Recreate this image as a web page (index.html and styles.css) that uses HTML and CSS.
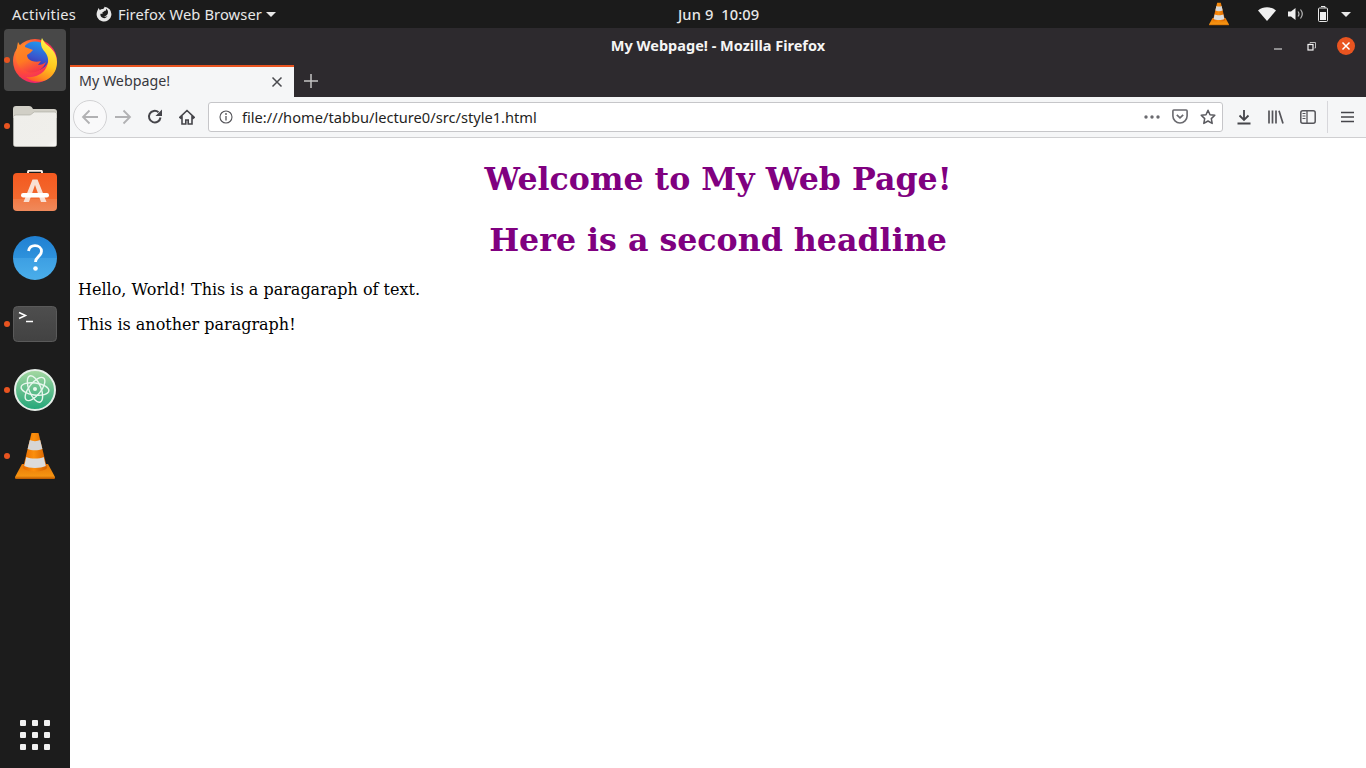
FILE: index.html
```html
<!DOCTYPE html>
<html>
<head>
    <meta charset="UTF-8">
    <meta name="viewport" content="width=device-width, initial-scale=1.0">
    <title>My Webpage! - Mozilla Firefox</title>
    <link rel="stylesheet" href="styles.css">
</head>
<body>
    <svg class="defs" width="0" height="0">
        <defs>
            <radialGradient id="foxBase" cx="0.25" cy="0.3" r="0.9">
                <stop offset="0" stop-color="#ff9a2a"/>
                <stop offset="0.5" stop-color="#ff4a3a"/>
                <stop offset="0.85" stop-color="#ee1f72"/>
                <stop offset="1" stop-color="#c9189a"/>
            </radialGradient>
            <linearGradient id="foxTail" x1="0.6" y1="0" x2="0.3" y2="1">
                <stop offset="0" stop-color="#fff44a"/>
                <stop offset="0.55" stop-color="#ffc81e"/>
                <stop offset="0.85" stop-color="#ff8a1e"/>
                <stop offset="1" stop-color="#ff5a2a"/>
            </linearGradient>
            <linearGradient id="foxGlobe" x1="0.7" y1="0" x2="0.4" y2="1">
                <stop offset="0" stop-color="#1d9af0"/>
                <stop offset="0.55" stop-color="#3a55cc"/>
                <stop offset="1" stop-color="#3f1f9a"/>
            </linearGradient>
            <linearGradient id="foxFur" x1="0.2" y1="0" x2="0.6" y2="1">
                <stop offset="0" stop-color="#ff8a2a"/>
                <stop offset="0.55" stop-color="#ff7a22"/>
                <stop offset="1" stop-color="#f4344a"/>
            </linearGradient>
            <linearGradient id="folderBody" x1="0" y1="0" x2="1" y2="1">
                <stop offset="0" stop-color="#efeeea"/>
                <stop offset="0.85" stop-color="#f0efeb"/>
                <stop offset="1" stop-color="#fbfbf9"/>
            </linearGradient>
            <linearGradient id="shopBody" x1="0" y1="0" x2="0" y2="1">
                <stop offset="0" stop-color="#f4591f"/>
                <stop offset="0.68" stop-color="#f26a30"/>
                <stop offset="0.68" stop-color="#f27a45"/>
                <stop offset="1" stop-color="#ef8a5c"/>
            </linearGradient>
            <linearGradient id="helpBody" x1="0" y1="0" x2="0" y2="1">
                <stop offset="0" stop-color="#2080d2"/>
                <stop offset="0.5" stop-color="#2e92dc"/>
                <stop offset="0.5" stop-color="#3d9fe3"/>
                <stop offset="1" stop-color="#4aaeea"/>
            </linearGradient>
            <linearGradient id="termBody" x1="0" y1="0" x2="0" y2="1">
                <stop offset="0" stop-color="#4e4e4e"/>
                <stop offset="1" stop-color="#424242"/>
            </linearGradient>
            <linearGradient id="atomBody" x1="0" y1="0" x2="0" y2="1">
                <stop offset="0" stop-color="#a6d8a2"/>
                <stop offset="1" stop-color="#22a679"/>
            </linearGradient>
            <linearGradient id="coneBody" x1="0" y1="0" x2="1" y2="0">
                <stop offset="0" stop-color="#e86a00"/>
                <stop offset="0.45" stop-color="#fb8f0c"/>
                <stop offset="1" stop-color="#d45f00"/>
            </linearGradient>
            <linearGradient id="coneBase" x1="0" y1="0" x2="0" y2="1">
                <stop offset="0" stop-color="#e87704"/>
                <stop offset="0.8" stop-color="#f59412"/>
                <stop offset="1" stop-color="#b85600"/>
            </linearGradient>
            <symbol id="cone" viewBox="0 0 40 46">
                <path d="M7 31L0 44c0 1 0 2 1 2h38c1 0 1-1 1-2l-7-13z" fill="url(#coneBase)"/>
                <path d="M16.500 0h7L32 35c-3 4.500-21 4.500-24 0z" fill="url(#coneBody)"/>
                <path d="M14.800 7c3 1.500 7.400 1.500 10.400 0l2.200 9c-4 1.700-11 1.700-14.800 0z" fill="#d6d6d6"/>
                <path d="M11.300 24c4.500 2 13 2 17.400 0l2.100 9c-5 2.500-16.600 2.500-21.600 0z" fill="#dcdcdc"/>
            </symbol>
        </defs>
    </svg>

    <div class="topbar">
        <div class="topbar-left">
            <span class="activities">Activities</span>
            <span class="app-menu">
                <svg class="app-menu-icon" width="16" height="16" viewBox="0 0 16 16">
                    <path d="M8 .8a7.400 7.400 0 1 1-6.800 4.500L2.600 2l1.300 2.200C5 3.200 6.200 3 7 3.100 9 1.500 8.500 1 8 .8z" fill="#e8e8e8"/>
                    <path d="M10.500 2.800c1.500 1.500 1.700 3 1.400 4.500-.5 2-2.400 3.200-4.300 2.800 1.200 1.200 3 .8 3.800 0-.8 2.200-4.200 2.800-6 .9-.9-1-1.200-2.300-.9-3.300.6.200 1.500.1 2.400-.5l-.6-.9c.8-.1 2-.8 2.300-1.500.8.400 1.400.1 1.900-2.500z" fill="#1c1c1c"/>
                </svg>
                <span>Firefox Web Browser</span>
                <i class="caret"></i>
            </span>
        </div>
        <div class="clock">Jun 9&nbsp;&nbsp;10:09</div>
        <div class="tray">
            <svg class="tray-vlc" width="20" height="24" viewBox="0 0 40 46"><use href="#cone"/></svg>
            <svg class="tray-wifi" width="18" height="14" viewBox="0 0 18 14"><path d="M0 3.500C5-.8 13-.8 18 3.500L9 14z" fill="#f0f0f0"/></svg>
            <svg class="tray-sound" width="16" height="14" viewBox="0 0 16 14">
                <path d="M0 4.500h3L7.500 1v12L3 9.500H0z" fill="#f0f0f0"/>
                <path d="M10 4.500c1.200 1.500 1.200 3.500 0 5M12.500 2.500c2.200 2.800 2.200 6.200 0 9" fill="none" stroke="#b9b9b9" stroke-width="1.200"/>
            </svg>
            <svg class="tray-battery" width="10" height="16" viewBox="0 0 10 16">
                <path d="M3 .5h4v1.500" fill="none" stroke="#e8e8e8"/>
                <rect x=".5" y="2" width="9" height="13.500" rx="1" fill="none" stroke="#e8e8e8"/>
                <rect x="2" y="6" width="6" height="8" fill="#f0f0f0"/>
            </svg>
            <i class="caret tray-caret"></i>
        </div>
    </div>

    <div class="desktop">
        <div class="dock">
            <div class="dock-item active running">
                <svg width="44" height="45" viewBox="0 0 44 45">
                    <circle cx="22" cy="23" r="22" fill="url(#foxBase)"/>
                    <circle cx="22" cy="18" r="14.500" fill="url(#foxGlobe)"/>
                    <path d="M29 0C27 5 28 10 32 14C36 19 36 25 33 30C30 36 22 40 13 39C20 45 29 45 35 41C41 37 44 31 44 24C44 14 37 9 33 6C31 4 30 2 29 0z" fill="url(#foxTail)"/>
                    <path d="M5 4L8 9C9 7 11 6 13 5C12 7 12 8 12 9L20 12L17 15L14 17C14 20 16 22 19 23C22 24 25 24 28 23L25 27C28 27 31 26 33 24C30 32 22 36 15 34C8 32 3 26 3 19C3 14 4 9 5 4z" fill="url(#foxFur)"/>
                </svg>
            </div>
            <div class="dock-item running">
                <svg width="44" height="41" viewBox="0 0 44 41">
                    <path d="M0 3c0-2 1-3 3-3h13c2 0 3 1 4 3h21c2 0 3 1 3 3v6H0z" fill="#d1cfc6"/>
                    <path d="M.3 11c0-1 1-2 3-2h13c2 0 3-2 5-3h20c1.500 0 2.500 1 2.500 3v29c0 2-1 2.700-3 2.700H3.300c-2 0-3-.7-3-2.700z" fill="url(#folderBody)" stroke="#a9a89f" stroke-width=".6"/>
                </svg>
            </div>
            <div class="dock-item shop">
                <svg width="44" height="41" viewBox="0 0 44 41">
                    <path d="M15 5V2c0-.8.400-1.200 1.200-1.200h11.600c.8 0 1.200.4 1.200 1.200v3" fill="none" stroke="#f7ece4" stroke-width="2"/>
                    <rect y="3" width="44" height="38" rx="4" fill="url(#shopBody)"/>
                    <path d="M19.500 9.500h5L33.500 32H28L22 15 16 32h-5.500z" fill="#f9dfd3"/>
                    <rect x="8" y="23" width="28" height="4.500" rx="2.200" fill="#fff"/>
                </svg>
            </div>
            <div class="dock-item">
                <svg width="44" height="44" viewBox="0 0 44 44">
                    <circle cx="22" cy="22" r="22" fill="url(#helpBody)"/>
                    <path d="M15.500 15c.8-3.800 3.300-5.300 6.500-5.300 3.700 0 6.500 2.200 6.500 5.600 0 4.900-6 5.300-6 10.700" fill="none" stroke="#fff" stroke-width="2.800"/>
                    <circle cx="22.500" cy="32.500" r="2.300" fill="#fff"/>
                </svg>
            </div>
            <div class="dock-item running">
                <svg width="44" height="36" viewBox="0 0 44 36">
                    <rect x=".5" y=".5" width="43" height="35" rx="4" fill="url(#termBody)" stroke="#5a5a5a"/>
                    <path d="M6 6.500l6.500 3-6.500 3" fill="none" stroke="#fff" stroke-width="1.500"/>
                    <path d="M13 15.500h7" stroke="#fff" stroke-width="1.500"/>
                </svg>
            </div>
            <div class="dock-item running">
                <svg width="42" height="42" viewBox="0 0 42 42">
                    <circle cx="21" cy="21" r="20" fill="url(#atomBody)" stroke="#e6efe9" stroke-width="2"/>
                    <g fill="none" stroke="#e8f7ee" stroke-width="1.400" transform="rotate(8 21 20)">
                        <ellipse cx="21" cy="20" rx="14" ry="6"/>
                        <ellipse cx="21" cy="20" rx="14" ry="6" transform="rotate(60 21 20)"/>
                        <ellipse cx="21" cy="20" rx="14" ry="6" transform="rotate(120 21 20)"/>
                    </g>
                    <circle cx="21" cy="20" r="2" fill="#e8f7ee"/>
                </svg>
            </div>
            <div class="dock-item running">
                <svg width="40" height="46" viewBox="0 0 40 46"><use href="#cone"/></svg>
            </div>
            <div class="show-apps">
                <i></i><i></i><i></i><i></i><i></i><i></i><i></i><i></i><i></i>
            </div>
        </div>

        <div class="window">
            <div class="titlebar">
                <div class="title">My Webpage! - Mozilla Firefox</div>
                <div class="window-controls">
                    <svg class="ctl-min" width="8" height="2" viewBox="0 0 8 2"><path d="M0 1h8" stroke="#f0f0f0" stroke-width="1"/></svg>
                    <svg class="ctl-max" width="9" height="9" viewBox="0 0 9 9">
                        <path d="M3 1.500V.5h5.500V6H7.500" fill="none" stroke="#bdbdbd"/>
                        <rect x="1" y="2.500" width="5" height="5.500" fill="none" stroke="#f5f5f5" stroke-width="1.200"/>
                    </svg>
                    <svg class="ctl-close" width="18" height="18" viewBox="0 0 18 18">
                        <circle cx="9" cy="9" r="9" fill="#e95420"/>
                        <path d="M5.500 5.500l7 7M12.500 5.500l-7 7" stroke="#fff" stroke-width="1.500"/>
                    </svg>
                </div>
            </div>

            <div class="tabbar">
                <div class="tab">
                    <span class="tab-label">My Webpage!</span>
                    <svg width="12" height="12" viewBox="0 0 12 12"><path d="M1.500 1.500l9 9M10.500 1.500l-9 9" stroke="#4a4a4f" stroke-width="1.500"/></svg>
                </div>
                <div class="new-tab">
                    <svg width="14" height="14" viewBox="0 0 14 14"><path d="M7 0v14M0 7h14" stroke="#c4c4c4" stroke-width="1.500"/></svg>
                </div>
            </div>

            <div class="navbar">
                <div class="nav-btn back">
                    <svg width="18" height="16" viewBox="0 0 18 16"><path d="M17 8H2M8.500 1.500L2 8l6.500 6.500" fill="none" stroke="#b1b1b3" stroke-width="1.800"/></svg>
                </div>
                <div class="nav-btn">
                    <svg width="18" height="16" viewBox="0 0 18 16"><path d="M1 8h15M9.500 1.500L16 8l-6.500 6.500" fill="none" stroke="#b1b1b3" stroke-width="1.800"/></svg>
                </div>
                <div class="nav-btn">
                    <svg width="16" height="16" viewBox="0 0 16 16"><path d="M13.500 8.500A5.800 5.800 0 1 1 11.500 3.200" fill="none" stroke="#45454a" stroke-width="2"/><path d="M15 .5v6.500H8.500z" fill="#45454a"/></svg>
                </div>
                <div class="nav-btn">
                    <svg width="16" height="16" viewBox="0 0 16 16"><path d="M8 1.500L.8 8.300l1.100 1L3 8.400V15h3.800v-4h2.400v4H13V8.400l1.100.9 1.100-1z" fill="none" stroke="#45454a" stroke-width="1.600"/></svg>
                </div>
                <div class="urlbar">
                    <svg class="url-info" width="14" height="14" viewBox="0 0 14 14">
                        <circle cx="7" cy="7" r="6" fill="none" stroke="#55555a" stroke-width="1.100"/>
                        <path d="M7 6v4.500" stroke="#55555a" stroke-width="1.300"/>
                        <circle cx="7" cy="4" r=".9" fill="#55555a"/>
                    </svg>
                    <span class="url-text">file:///home/tabbu/lecture0/src/style1.html</span>
                    <svg class="url-dots" width="16" height="4" viewBox="0 0 16 4"><circle cx="2" cy="2" r="1.700" fill="#6a6a6f"/><circle cx="8" cy="2" r="1.700" fill="#6a6a6f"/><circle cx="14" cy="2" r="1.700" fill="#6a6a6f"/></svg>
                    <svg class="url-pocket" width="16" height="15" viewBox="0 0 16 15"><path d="M1.800 1h12.400c.5 0 .9.400.9.900V7c0 3.800-3.200 7-7.100 7S.9 10.800.9 7V1.900c0-.5.400-.9.900-.9z" fill="none" stroke="#6a6a6f" stroke-width="1.600"/><path d="M4.800 5.800L8 8.800l3.200-3" fill="none" stroke="#6a6a6f" stroke-width="1.700"/></svg>
                    <svg class="url-star" width="16" height="16" viewBox="0 0 16 16"><path d="M8 1.300l2 4.400 4.800.6-3.500 3.300.9 4.800L8 12l-4.200 2.400.9-4.800L1.200 6.300 6 5.700z" fill="none" stroke="#5a5a5f" stroke-width="1.500" stroke-linejoin="round"/></svg>
                </div>
                <div class="nav-right">
                    <div class="nav-btn">
                        <svg width="14" height="16" viewBox="0 0 14 16"><path d="M7 1v10M2.500 6.500L7 11l4.500-4.500M.5 14.500h13" fill="none" stroke="#45454a" stroke-width="1.800"/></svg>
                    </div>
                    <div class="nav-btn">
                        <svg width="16" height="14" viewBox="0 0 16 14"><path d="M1 .5v13M4.500.5v13M8 .5v13M11 .7l4 12.800" fill="none" stroke="#55555a" stroke-width="1.700"/></svg>
                    </div>
                    <div class="nav-btn">
                        <svg width="16" height="14" viewBox="0 0 16 14"><rect x=".8" y=".8" width="14.400" height="12.400" rx="2" fill="none" stroke="#55555a" stroke-width="1.500"/><path d="M7 1v12" stroke="#55555a" stroke-width="1.300"/><path d="M2.500 3.500h3M2.500 6h3M2.500 8.500h3" stroke="#55555a"/></svg>
                    </div>
                    <i class="nav-divider"></i>
                    <div class="nav-btn">
                        <svg width="13" height="12" viewBox="0 0 13 12"><path d="M0 1.500h13M0 6h13M0 10.500h13" stroke="#45454a" stroke-width="1.600"/></svg>
                    </div>
                </div>
            </div>

            <div class="page">
                <h1>Welcome to My Web Page!</h1>
                <h1>Here is a second headline</h1>
                <p>Hello, World! This is a paragaraph of text.</p>
                <p>This is another paragraph!</p>
            </div>
        </div>
    </div>
</body>
</html>
```

FILE: styles.css
```css
* {
    box-sizing: border-box;
}
html, body {
    margin: 0;
    height: 100%;
    overflow: hidden;
}
body {
    display: flex;
    flex-direction: column;
    width: 1366px;
    height: 768px;
    font-family: "Noto Sans", sans-serif;
    font-size: 14px;
}
.defs {
    position: absolute;
}
svg {
    display: block;
    flex: none;
}

/* top bar */
.topbar {
    display: grid;
    grid-template-columns: 678px auto 1fr;
    align-items: center;
    height: 28px;
    background-color: #1b1b1b;
    color: #e8e8e8;
    font-size: 14.700px;
    letter-spacing: 0.1px;
}
.topbar-left {
    display: flex;
    align-items: center;
    padding-left: 12px;
}
.activities {
    width: 84px;
    letter-spacing: 0.3px;
}
.app-menu {
    display: flex;
    align-items: center;
    gap: 6px;
}
.caret {
    display: block;
    border-left: 5px solid transparent;
    border-right: 5px solid transparent;
    border-top: 5px solid #e8e8e8;
}
.app-menu .caret {
    margin-left: -2px;
}
.clock {
    font-weight: 500;
}
.tray {
    display: flex;
    align-items: center;
    justify-content: flex-end;
}
.tray-vlc {
    margin-right: 29px;
}
.tray-wifi {
    margin-right: 12px;
}
.tray-sound {
    margin-right: 14px;
}
.tray-battery {
    margin-right: 13px;
}
.tray-caret {
    margin-right: 15px;
}

/* dock */
.desktop {
    display: flex;
    flex: 1;
    min-height: 0;
}
.dock {
    display: flex;
    flex-direction: column;
    gap: 4px;
    width: 70px;
    padding: 1px 4px 18px;
    background-color: #1c1c1c;
}
.dock-item {
    position: relative;
    display: flex;
    align-items: center;
    justify-content: center;
    height: 62px;
    border-radius: 4px;
}
.dock-item.active {
    background-color: #484848;
}
.dock-item.shop svg {
    margin-bottom: 3px;
}
.dock-item.running::before {
    content: "";
    position: absolute;
    left: 0;
    top: 28px;
    width: 6px;
    height: 6px;
    border-radius: 50%;
    background-color: #e95420;
}
.show-apps {
    display: grid;
    grid-template-columns: repeat(3, 6px);
    gap: 6px;
    justify-content: center;
    margin-top: auto;
}
.show-apps i {
    width: 6px;
    height: 6px;
    border-radius: 1px;
    background-color: #f0f0f0;
}

/* window */
.window {
    display: flex;
    flex-direction: column;
    flex: 1;
    min-width: 0;
}
.titlebar {
    position: relative;
    display: flex;
    align-items: center;
    justify-content: center;
    height: 37px;
    padding-bottom: 4px;
    background-color: #2d2a2e;
    color: #f5f5f5;
    font-size: 14.500px;
    font-weight: 700;
}
.window-controls {
    position: absolute;
    right: 11px;
    top: 9px;
    display: flex;
    align-items: center;
}
.ctl-min {
    margin-top: 5px;
    margin-right: 25px;
}
.ctl-max {
    margin-right: 21px;
}
.tabbar {
    display: flex;
    height: 32px;
    background-color: #2d2a2e;
}
.tab {
    display: flex;
    align-items: center;
    justify-content: space-between;
    width: 224px;
    padding: 0 11px 0 9px;
    border-top: 2px solid #e95420;
    background-color: #f5f6f7;
    color: #38383d;
    font-size: 14.250px;
}
.tab-label {
    padding-bottom: 4px;
}
.new-tab {
    display: flex;
    align-items: center;
    justify-content: center;
    width: 34px;
}
.navbar {
    display: flex;
    align-items: center;
    height: 41px;
    padding: 0 3px 1px 3px;
    border-bottom: 1px solid #cfcfd1;
    background-color: #f5f6f7;
}
.nav-btn {
    display: flex;
    align-items: center;
    justify-content: center;
    width: 32px;
    height: 32px;
}
.nav-btn.back {
    width: 34px;
    height: 34px;
    border: 1px solid #d2d2d4;
    border-radius: 50%;
    background-color: #f9f9fa;
}
.urlbar {
    display: flex;
    align-items: center;
    flex: 1;
    height: 30px;
    margin-left: 5px;
    padding: 0 6px 0 10px;
    border: 1px solid #c6c6c9;
    border-radius: 3px;
    background-color: #fff;
    font-size: 14.650px;
}
.url-text {
    flex: 1;
    margin-left: 9px;
    padding-top: 1px;
    color: #1f1f23;
}
.url-dots {
    margin-right: 12px;
}
.url-pocket {
    margin-right: 12px;
}
.nav-right {
    display: flex;
    align-items: center;
    margin-left: 5px;
}
.nav-divider {
    width: 1px;
    height: 32px;
    margin: 0 3px;
    background-color: #d7d7db;
}

/* page inside the browser */
.page {
    flex: 1;
    padding: 0 8px 8px;
    background-color: #fff;
    color: #000;
    font-family: "DejaVu Serif", serif;
    font-size: 16px;
}
.page h1 {
    margin: 21px 0 20px;
    color: purple;
    font-size: 31.650px;
    line-height: 40px;
    font-weight: 700;
    text-align: center;
}
.page p {
    margin: 16px 0;
}
```
